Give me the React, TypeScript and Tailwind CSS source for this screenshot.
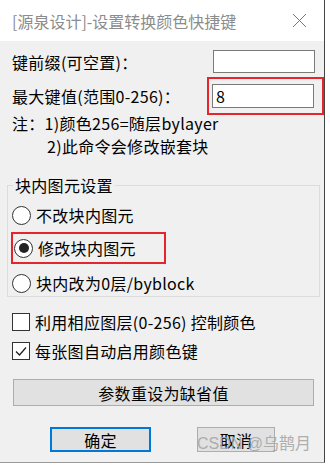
import React from "react";

const font = { fontFamily: '"Noto Sans CJK SC", "Noto Sans", sans-serif' };

function Radio({ checked }: { checked?: boolean }) {
    return (
        <span className="flex h-[19px] w-[19px] shrink-0 items-center justify-center rounded-full border border-[#333] bg-white">
            {checked && <span className="h-[10px] w-[10px] rounded-full bg-[#222]" />}
        </span>
    );
}

function Check({ checked }: { checked?: boolean }) {
    return (
        <span className="flex h-[18px] w-[18px] shrink-0 items-center justify-center border border-[#333] bg-white">
            {checked && (
                <svg width="14" height="14" viewBox="0 0 14 14">
                    <path d="M2 7.5 L5.5 11 L12 3.5" fill="none" stroke="#222" strokeWidth="1.3" />
                </svg>
            )}
        </span>
    );
}

export default function App() {
    return (
        <div className="relative h-[463px] w-[325px] border-r border-b border-r-[#444] border-b-[#999] bg-[#f0f0f0] text-[16px] leading-none tracking-[0.3px] text-black" style={font}>
            {/* Title bar */}
            <div className="flex h-[41px] items-center justify-between bg-white pl-[12px] pr-[17px]">
                <span className="text-[16px] tracking-normal text-[#8c8c8c]">[源泉设计]-设置转换颜色快捷键</span>
                <svg width="15" height="15" viewBox="0 0 15 15">
                    <path d="M1 1 L14 14 M14 1 L1 14" stroke="#777" strokeWidth="1" />
                </svg>
            </div>

            {/* Key prefix */}
            <div className="mt-[9px] flex h-[23px] items-center justify-between pl-[12px] pr-[9px]">
                <span>键前缀(可空置)：</span>
                <div className="h-[23px] w-[102px] border border-[#7a7a7a] bg-white" />
            </div>

            {/* Max key value */}
            <div className="mt-[4px] flex h-[38px] items-center justify-between pl-[12px]">
                <span>最大键值(范围0-256)：</span>
                <div className="flex h-[38px] w-[117px] items-center border-2 border-[#e5252b] pl-[3px]">
                    <div className="flex h-[24px] w-[102px] items-center border border-[#7a7a7a] bg-white pl-[3px] text-[16px]">8</div>
                </div>
            </div>

            {/* Notes */}
            <div className="flex h-[16px] items-center whitespace-pre pl-[12px]">注：1)颜色256=随层bylayer</div>
            <div className="flex h-[30px] items-center pl-[47px]">2)此命令会修改嵌套块</div>

            {/* Group */}
            <fieldset className="mt-[13px] ml-[7px] w-[313px] border border-[#dcdcdc] pb-0">
                <legend className="ml-[5px] px-[2px] leading-[22px]">块内图元设置</legend>
                <div className="pt-[2px]">
                    <div className="flex h-[34px] items-center gap-[5px] pl-[4px]">
                        <Radio />
                        <span>不改块内图元</span>
                    </div>
                    <div className="flex h-[34px] items-start pl-[3px]">
                        <div className="flex h-[32px] w-[155px] items-center gap-[5px] border-2 border-[#e5252b] pl-[1px]">
                            <Radio checked />
                            <span>修改块内图元</span>
                        </div>
                    </div>
                    <div className="flex h-[30px] items-center gap-[5px] pt-[4px] pl-[4px]">
                        <Radio />
                        <span>块内改为0层/byblock</span>
                    </div>
                </div>
            </fieldset>

            {/* Checkboxes */}
            <div className="mt-[10px] flex h-[29px] items-center gap-[5px] pl-[12px]">
                <Check />
                <span className="whitespace-pre">利用相应图层(0-256) 控制颜色</span>
            </div>
            <div className="flex h-[29px] items-center gap-[5px] pl-[12px]">
                <Check checked />
                <span>每张图自动启用颜色键</span>
            </div>

            {/* Reset */}
            <div className="mt-[14px] ml-[13px] flex h-[27px] w-[301px] items-center justify-center border border-[#adadad] bg-[#e1e1e1]">
                参数重设为缺省值
            </div>

            {/* OK / Cancel */}
            <div className="mt-[21px] flex h-[25px] items-center">
                <div className="ml-[50px] flex h-[25px] w-[101px] items-center justify-center border-2 border-[#0078d7] bg-[#e1e1e1]">确定</div>
                <div className="ml-[46px] flex h-[25px] w-[78px] items-center justify-center border border-[#adadad] bg-[#e1e1e1]">取消</div>
            </div>

            {/* Watermark */}
            <div className="absolute left-[197px] top-[433px] whitespace-nowrap text-[16px] leading-[22px] tracking-normal text-[#a8a8a8] opacity-90" style={{ fontFamily: '"Liberation Sans", "Noto Sans CJK SC", sans-serif' }}>
                CSDN @乌鹊月
            </div>
        </div>
    );
}
